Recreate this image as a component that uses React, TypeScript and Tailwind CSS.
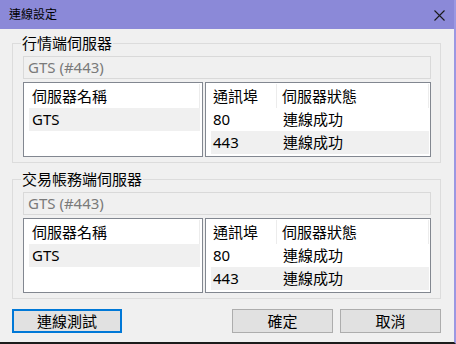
const font = { fontFamily: '"Noto Sans", "Noto Sans CJK TC", sans-serif' }

type Row = { port: string; status: string }

function ServerGroup({ title, rows }: { title: string; rows: Row[] }) {
    return (
        <fieldset className="border border-[#dcdcdc] pl-[10px] pr-[9px] pb-[5px]">
            <legend className="-ml-[2px] px-[1px] text-[15px] leading-[20px] text-black">{title}</legend>
            <div className="mt-[3px] h-[23px] border border-[#d9d9d9] bg-[#f0f0f0] pl-[4px] text-[15px] leading-[21px] text-[#7a7a7a]">
                GTS (#443)
            </div>
            <div className="mt-[3px] flex gap-[2px]">
                <div className="w-[180px] h-[75px] border border-[#828790] bg-white pl-[5px] pr-[2px] pt-[1px]">
                    <div className="h-[24px] border-r border-[#ececec] pl-[3px] text-[15px] leading-[24px] text-black">伺服器名稱</div>
                    <div className="h-[23px] bg-[#f0f0f0] pl-[3px] text-[15px] leading-[23px] text-black">GTS</div>
                </div>
                <div className="w-[226px] h-[75px] border border-[#828790] bg-white pl-[5px] pr-[1px] pt-[1px]">
                    <div className="flex h-[24px] border-r border-[#ececec] text-[15px] leading-[24px] text-black">
                        <div className="w-[66px] border-r border-[#ececec] pl-[2px]">通訊埠</div>
                        <div className="pl-[5px]">伺服器狀態</div>
                    </div>
                    {rows.map((r, i) => (
                        <div key={r.port} className={`flex h-[23px] text-[15px] leading-[23px] text-black ${i % 2 === 1 ? "bg-[#f0f0f0]" : ""}`}>
                            <div className="w-[66px] pl-[2px]">{r.port}</div>
                            <div className="pl-[6px]">{r.status}</div>
                        </div>
                    ))}
                </div>
            </div>
        </fieldset>
    )
}

export default function App() {
    const rows = [
        { port: "80", status: "連線成功" },
        { port: "443", status: "連線成功" },
    ]
    return (
        <div style={font} className="w-[456px] h-[344px] flex flex-col bg-[#f0f0f0] border-r-2 border-b-2 border-r-[#9b98e2] border-b-[#1c1c1c]">
            <div className="h-[29px] shrink-0 bg-[#8b89d8] flex items-center justify-between pl-[9px] pr-[9px]">
                <span className="text-[12px] text-black">連線設定</span>
                <svg width="11" height="11" viewBox="0 0 11 11" className="mt-[1px]">
                    <path d="M0.5 0.5 L10.5 10.5 M10.5 0.5 L0.5 10.5" stroke="#1a1a1a" strokeWidth="1.1" fill="none" />
                </svg>
            </div>
            <div className="flex flex-col pl-[12px] pr-[13px] pt-[4px]">
                <ServerGroup title="行情端伺服器" rows={rows} />
                <div className="mt-[6px]">
                    <ServerGroup title="交易帳務端伺服器" rows={rows} />
                </div>
                <div className="mt-[10px] flex items-center">
                    <button className="w-[110px] h-[24px] border-2 border-[#0078d7] bg-[#e1e1e1] text-[15px] leading-[18px] text-black">連線測試</button>
                    <button className="ml-auto w-[101px] h-[24px] border border-[#adadad] bg-[#e1e1e1] text-[15px] leading-[20px] text-black">確定</button>
                    <button className="ml-[7px] w-[101px] h-[24px] border border-[#adadad] bg-[#e1e1e1] text-[15px] leading-[20px] text-black">取消</button>
                </div>
            </div>
        </div>
    )
}
